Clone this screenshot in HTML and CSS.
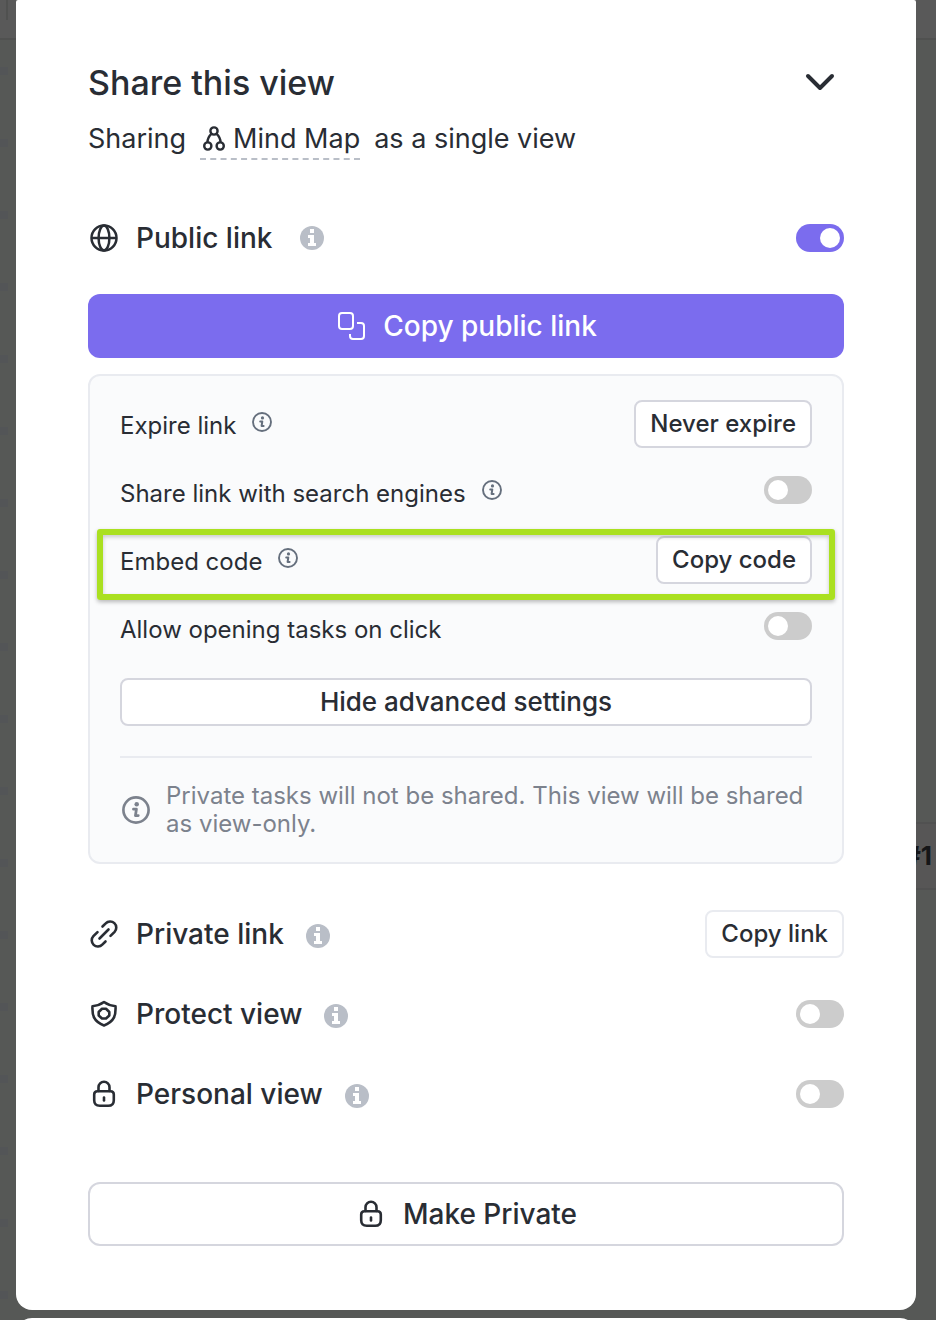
FILE: index.html
```html
<!DOCTYPE html>
<html lang="en">
<head>
<meta charset="utf-8">
<meta name="viewport" content="width=device-width, initial-scale=1">
<title>Share this view</title>
<link rel="stylesheet" href="styles.css">
</head>
<body>
<svg class="sprite" aria-hidden="true">
  <symbol id="i-info" viewBox="0 0 20 20">
    <circle cx="10" cy="10" r="9" fill="none" stroke="currentColor" stroke-width="1.9"/>
    <circle cx="10.5" cy="5.900" r="1.600" fill="currentColor"/>
    <path d="M8.200 9.400h2.100l-.700 4.600h2" fill="none" stroke="currentColor" stroke-width="2" stroke-linecap="round" stroke-linejoin="round"/>
  </symbol>
  <symbol id="i-info-solid" viewBox="0 0 24 24">
    <circle cx="12" cy="12" r="12" fill="#b9bec7"/>
    <path d="M10 3h4v4h-4zM8 9h6v8h2v3H8v-3h2v-5H8z" fill="#fff"/>
  </symbol>
  <symbol id="i-lock" viewBox="0 0 32 32">
    <g fill="none" stroke="currentColor" stroke-width="2.600" stroke-linejoin="round" stroke-linecap="round">
      <path d="M10.500 13V9.300a5.500 5.500 0 0 1 11 0V13"/>
      <path d="M9.500 13.200h13q3.300 0 3.300 3.300v5.700q0 5.600-5.600 5.600h-8.400q-5.600 0-5.600-5.600v-5.700q0-3.300 3.300-3.300z"/>
      <path d="M16 19.500v3"/>
    </g>
  </symbol>
</svg>

<div class="page">
  <div class="backdrop" aria-hidden="true">
    <div class="backdrop-bar"></div>
    <div class="backdrop-card">#1</div>
  </div>

  <main class="modal">
    <header class="title-row">
      <h1 class="title">Share this view</h1>
      <button class="icon-button" type="button" aria-label="Collapse">
        <svg class="chevron" viewBox="0 0 32 32" aria-hidden="true"><path d="M4 10l12 12L28 10" fill="none" stroke="currentColor" stroke-width="4" stroke-linecap="round" stroke-linejoin="round"/></svg>
      </button>
    </header>

    <p class="subtitle">
      <span>Sharing</span>
      <a class="view-link" href="#">
        <svg class="view-icon" viewBox="0 0 22 26" aria-hidden="true"><g fill="none" stroke="currentColor" stroke-width="2.400"><circle cx="11" cy="5" r="3.600"/><circle cx="4.800" cy="20" r="3.600"/><circle cx="17.200" cy="20" r="3.600"/><path d="M8.600 7.600C6 10 4.500 13 4.400 16.500M13.400 7.600C16 10 17.500 13 17.600 16.500"/></g></svg>
        <span>Mind Map</span>
      </a>
      <span>as a single view</span>
    </p>

    <section class="row public-row">
      <svg class="icon" viewBox="0 0 32 32" aria-hidden="true"><g fill="none" stroke="currentColor" stroke-width="2.500"><circle cx="16" cy="16" r="12.500"/><ellipse cx="16" cy="16" rx="5.400" ry="12.500"/><path d="M3.500 16h25"/></g></svg>
      <label class="row-label" for="public">Public link</label>
      <svg class="info-solid" aria-hidden="true"><use href="#i-info-solid"/></svg>
      <input class="toggle" id="public" type="checkbox" checked>
    </section>

    <button class="button button-primary" type="button">
      <svg class="icon" viewBox="0 0 32 32" aria-hidden="true"><g fill="none" stroke="currentColor" stroke-width="2"><rect x="4" y="3" width="14" height="16" rx="3"/><path d="M22 13h4q3 0 3 3v10q0 3-3 3h-8q-3 0-3-3v-2"/></g></svg>
      Copy public link
    </button>

    <section class="panel">
      <div class="setting">
        <span class="setting-label">Expire link</span>
        <svg class="info" aria-hidden="true"><use href="#i-info"/></svg>
        <button class="button button-small" type="button">Never expire</button>
      </div>
      <div class="setting setting-toggle">
        <label class="setting-label" for="search">Share link with search engines</label>
        <svg class="info" aria-hidden="true"><use href="#i-info"/></svg>
        <input class="toggle" id="search" type="checkbox">
      </div>
      <div class="setting setting-marked">
        <span class="setting-label">Embed code</span>
        <svg class="info" aria-hidden="true"><use href="#i-info"/></svg>
        <button class="button button-small" type="button">Copy code</button>
      </div>
      <div class="setting setting-toggle">
        <label class="setting-label" for="tasks">Allow opening tasks on click</label>
        <input class="toggle" id="tasks" type="checkbox">
      </div>
      <button class="button button-small button-wide" type="button">Hide advanced settings</button>
      <hr class="rule">
      <div class="note">
        <svg class="note-icon" aria-hidden="true"><use href="#i-info"/></svg>
        <p class="note-text">Private tasks will not be shared. This view will be shared as view-only.</p>
      </div>
    </section>

    <section class="options">
      <div class="row">
        <svg class="icon" viewBox="0 0 32 32" aria-hidden="true"><g fill="none" stroke="currentColor" stroke-width="2.600" stroke-linecap="round"><path d="M14.500 8.500l3.200-3.100a6 6 0 0 1 8.900 8.400l-4.100 4.100"/><path d="M17.500 23.500l-3.200 3.100a6 6 0 0 1-8.900-8.400l4.100-4.100"/><path d="M11.500 20.500l9-9"/></g></svg>
        <span class="row-label">Private link</span>
        <svg class="info-solid" aria-hidden="true"><use href="#i-info-solid"/></svg>
        <button class="button button-small button-light" type="button">Copy link</button>
      </div>
      <div class="row">
        <svg class="icon" viewBox="0 0 32 32" aria-hidden="true"><g fill="none" stroke="currentColor" stroke-width="2.600" stroke-linejoin="round"><path d="M16 4c3.500 2.500 7 3.700 11.500 4.200C28 17 26.500 23.500 16 27.500 5.500 23.500 4 17 4.500 8.200 9 7.700 12.500 6.500 16 4z"/><path d="M14 10.800h4l3.300 3.200v3.500L18 20.500h-4L10.700 17.500v-3.500z"/></g></svg>
        <label class="row-label" for="protect">Protect view</label>
        <svg class="info-solid" aria-hidden="true"><use href="#i-info-solid"/></svg>
        <input class="toggle" id="protect" type="checkbox">
      </div>
      <div class="row">
        <svg class="icon" aria-hidden="true"><use href="#i-lock"/></svg>
        <label class="row-label" for="personal">Personal view</label>
        <svg class="info-solid" aria-hidden="true"><use href="#i-info-solid"/></svg>
        <input class="toggle" id="personal" type="checkbox">
      </div>
    </section>

    <button class="button button-private" type="button">
      <svg class="icon" aria-hidden="true"><use href="#i-lock"/></svg>
      Make Private
    </button>
  </main>
  <div class="next-panel"></div>
</div>
</body>
</html>
```
FILE: styles.css
```css
* {
  box-sizing: border-box;
}

body {
  margin: 0;
  background: #565856;
  color: #292d34;
  font-family: Inter, "Liberation Sans", sans-serif;
  font-size: 24px;
}

h1,
p {
  margin: 0;
}

svg {
  display: block;
  flex: none;
}

.sprite {
  position: absolute;
  width: 0;
  height: 0;
}

.page {
  position: relative;
  display: flex;
  flex-direction: column;
  gap: 8px;
  min-height: 100vh;
  padding: 0 20px 0 16px;
  overflow: clip;
}

.backdrop {
  position: absolute;
  inset: 0;
  background: linear-gradient(#565856 64px, #535557 64px) 0 3px / 8px 72px repeat-y, #565856;
}

.backdrop-bar {
  height: 40px;
  border-bottom: 2px solid #505150;
  background: linear-gradient(#505150, #505150) 6px 0 / 2px 20px no-repeat, #595959;
}

.backdrop-card {
  position: absolute;
  top: 822px;
  right: 0;
  width: 60px;
  padding-right: 4px;
  border: 2px solid #515151;
  border-right: 0;
  background: #575656;
  color: #151618;
  font-size: 26px;
  font-weight: 700;
  line-height: 64px;
  text-align: right;
}

.modal {
  position: relative;
  display: flex;
  flex-direction: column;
  padding: 56px 72px 64px;
  border-radius: 2px 2px 16px 16px;
  background: #fff;
}

.next-panel {
  position: relative;
  height: 24px;
  margin-bottom: -22px;
  border-radius: 16px 16px 0 0;
  background: #fff;
}

.title-row {
  display: flex;
  align-items: center;
  justify-content: space-between;
  height: 52px;
}

.title {
  font-size: 34px;
  font-weight: 500;
}

.icon-button {
  margin-right: 8px;
  padding: 0;
  border: 0;
  background: none;
  color: inherit;
}

.chevron {
  width: 32px;
  height: 32px;
}

.subtitle {
  display: flex;
  gap: 14px;
  margin-top: 12px;
  font-size: 27px;
  line-height: 38px;
}

.view-link {
  display: flex;
  gap: 8px;
  align-items: center;
  padding-left: 3px;
  border-bottom: 2px dashed #b9bec7;
  color: inherit;
  text-decoration: none;
}

.view-icon {
  width: 22px;
  height: 26px;
}

.row {
  display: flex;
  align-items: center;
  height: 48px;
}

.public-row {
  margin: 54px 0 32px;
}

.icon {
  width: 32px;
  height: 32px;
}

.row-label {
  margin: 0 22px 0 16px;
  font-size: 28px;
  font-weight: 500;
}

.public-row .row-label {
  margin-right: 28px;
}

.info-solid {
  width: 24px;
  height: 24px;
}

.options .info-solid {
  margin-top: 4px;
}

.toggle {
  flex: none;
  width: 48px;
  height: 28px;
  margin: 0 0 0 auto;
  padding: 4px;
  border-radius: 14px;
  background: #ccc;
  appearance: none;
}

.toggle::before {
  display: block;
  width: 20px;
  height: 20px;
  border-radius: 50%;
  background: #fff;
  content: "";
}

.toggle:checked {
  background: #7b6cee;
}

.toggle:checked::before {
  margin-left: auto;
}

.button {
  display: flex;
  align-items: center;
  justify-content: center;
  border: 2px solid #d5d6de;
  background: #fff;
  color: inherit;
  font-family: inherit;
  font-weight: 500;
}

.button-primary,
.button-private {
  gap: 16px;
  height: 64px;
  border-radius: 12px;
  font-size: 28px;
}

.button-primary {
  border: 0;
  background: #7b6cee;
  color: #fff;
}

.button-private {
  margin-top: 64px;
}

.button-small {
  height: 48px;
  margin-left: auto;
  padding: 0 14px 2px;
  border-radius: 8px;
  font-size: 24px;
}

.button-wide {
  width: 100%;
  margin-top: 26px;
  font-size: 26px;
}

.button-light {
  border-color: #e9ebf0;
}

.panel {
  margin-top: 16px;
  padding: 24px 30px;
  border: 2px solid #e9ebf0;
  border-radius: 12px;
  background: #fafbfc;
}

.setting {
  position: relative;
  display: flex;
  align-items: center;
  height: 48px;
}

.setting + .setting {
  margin-top: 20px;
}

.setting-label {
  padding-top: 2px;
}

.setting-toggle .toggle {
  margin-bottom: 4px;
}

.setting-marked::after {
  position: absolute;
  inset: -7px -23px -16px;
  border: 6px solid #aae020;
  border-radius: 3px;
  box-shadow: 0 2px 4px #0004, inset 0 2px 4px #0003;
  content: "";
  pointer-events: none;
}

.info {
  width: 20px;
  height: 20px;
  margin: 0 0 4px 16px;
  color: #656f7d;
}

.rule {
  height: 2px;
  margin: 30px 0 24px;
  border: 0;
  background: #e9ebf0;
}

.note {
  display: flex;
  gap: 16px;
  align-items: center;
  color: #7c828d;
  line-height: 28px;
}

.note-icon {
  width: 28px;
  height: 28px;
  margin-left: 2px;
}

.options {
  display: flex;
  flex-direction: column;
  gap: 32px;
  margin-top: 46px;
}
```
